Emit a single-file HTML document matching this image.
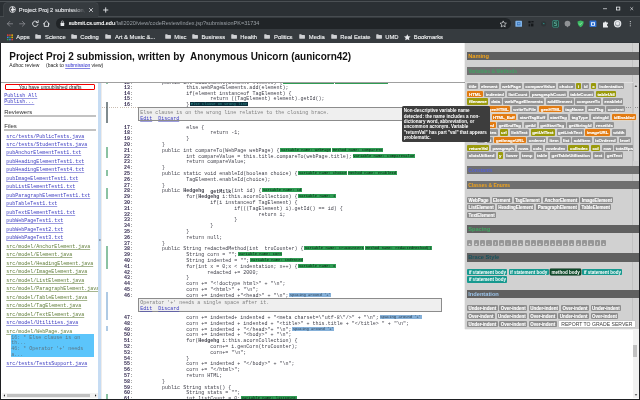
<!DOCTYPE html>
<html>
<head>
<meta charset="utf-8">
<title>Project Proj 2 submission</title>
<style>
*{box-sizing:border-box;margin:0;padding:0}
html,body{width:640px;height:400px;overflow:hidden;background:#fff}
body{position:relative;will-change:transform;font-family:"Liberation Sans",sans-serif;color:#000}
.abs{position:absolute}
/* ---------- browser chrome ---------- */
#tabstrip{left:0;top:0;width:640px;height:17px;background:#2b3034}
#tab{left:3.5px;top:3px;width:94px;height:14px;background:#363b3f;border-radius:3px 3px 0 0;box-shadow:0 0 0 0.6px #4b5054;clip-path:inset(-1px -1px 0 -1px)}
#toolbar{left:0;top:16.3px;width:640px;height:15.2px;background:#363b3f;border-top:0.6px solid #474c50}
#bmbar{left:0;top:31px;width:640px;height:12.3px;background:#363b3f}
#omni{left:56px;top:17.9px;width:454.5px;height:10.7px;border-radius:5.35px;background:#202427}
.ct{color:#e8eaed;font-size:5.6px;line-height:7px;white-space:pre}
.bm{top:33.5px;color:#f1f3f4;-webkit-text-stroke:0.12px #f1f3f4;font-size:5.85px;line-height:7px;white-space:pre}
.fold{top:34.3px;width:6.2px;height:5.1px}
/* ---------- page ---------- */
#page{left:0;top:43.3px;width:640px;height:356.7px;background:#fff;overflow:hidden}
#title{left:9.3px;top:50.9px;font-size:10px;font-weight:bold;line-height:12px;white-space:pre;color:#111}
#sub{left:9.3px;top:61.8px;font-size:5px;line-height:6px;white-space:pre;color:#222}
a{color:#2020c8;text-decoration:underline}
#hline{left:0;top:81.5px;width:465px;height:1.3px;background:#a0a0a0}
/* left */
#left{left:0;top:82.6px;width:98.2px;height:316px;overflow:hidden}
#drafts{left:5.4px;top:83.6px;width:89.4px;height:6.9px;border:0.7px solid #f20000;border-radius:1px;font-size:5px;line-height:5.6px;text-align:center;color:#222}
.mono{font-family:"Liberation Mono",monospace;font-size:5px;white-space:pre}
.lk{left:4.3px;color:#3a3ac4;text-decoration:underline;text-decoration-color:rgba(58,58,196,.5);line-height:6px}
.h3{left:4.2px;font-size:6px;line-height:8px;color:#333}
.rule{left:4.2px;width:91.8px;height:1.6px;background:#c2c2c2}
.f{left:6.2px;line-height:6px;text-decoration:underline}
.fb{color:#3a3ac0;text-decoration-color:rgba(58,58,192,.5)}
.fg{color:#5c7a34;text-decoration-color:rgba(92,122,52,.55)}
#splitter{left:98px;top:82.6px;width:3px;height:316px;background:#c6dcf3;box-shadow:0.6px 0 0 #e4e0dc}

/* code */
#code{left:101.7px;top:82.7px;width:363.3px;height:316px;overflow:hidden;background:#fff}
#code .in{position:absolute;left:0;top:-2.6px;width:500px}
.l{height:5.81px;line-height:5.81px;font-family:"Liberation Mono",monospace;font-size:5px;white-space:pre;tab-size:8;-moz-tab-size:8;color:#42424c;position:relative;letter-spacing:0.01px}
.n{display:inline-block;width:28.3px;text-align:right;font-weight:bold;color:#33294f}
.k{display:inline-block;width:8px;color:#444}
.g,.b,.d{display:inline-block;font-size:3.75px;line-height:4.1px;height:4.1px;padding:0 0.6px;margin-left:0.9px;vertical-align:-0.5px;position:relative;top:-1.5px;color:#08200f}
.g{background:#2f9c53}
.g+.g,.b+.b{margin-left:0.8px}
.b{background:#86b1d9;color:#1f3448}
.d{background:#0c2f3c;color:#2f8f8a}
.cm{margin:-1.9px 0 4.35px 36.3px;width:304px;height:14.05px;border:0.7px solid #8c8c8c;background:#efefef;font-family:"Liberation Mono",monospace;font-size:5px;line-height:5.9px;white-space:pre;color:#808080;padding:2.6px 0 0 1.2px}
.cm a{color:#3a3ac0;text-decoration-color:rgba(58,58,192,.5)}
.mk{position:absolute;left:4.3px;width:2px;opacity:.7}
.mg{background:#5aa87a}
.mb{background:#8db3d8}
.md{background:#4a5a5e}
#tip{left:401.6px;top:105.9px;width:88.2px;height:36px;border-radius:1.6px;background:#3d3d3d;color:#fff;font-weight:bold;font-size:4.55px;line-height:5.38px;white-space:pre;padding:2.4px 0 0 2.1px}

/* right panel */
#panel{left:465px;top:43.3px;width:175px;height:285.6px;box-shadow:0 0 1px rgba(0,0,0,.35);background:#d1d1d1;overflow:hidden}
.bar{left:466.9px;width:173.1px;background:#606060;font-weight:bold;white-space:pre;padding-left:1.3px}
.b1{height:8.1px;font-size:5.7px;line-height:8.3px}
.b2{height:8.1px;font-size:5px;line-height:8.2px;background:#707070}
.row{white-space:nowrap;height:6.3px;font-size:0;margin-top:-0.1px}
.t{display:inline-block;height:6.3px;line-height:6.3px;font-size:4.375px;font-weight:bold;color:#fff;-webkit-text-stroke:0.12px #fff;background:#949494;border-radius:1px;padding:1.05px 1.36px 0;margin-right:1.75px;vertical-align:top}
.o{background:#e27b12;color:#fff;padding:1.05px 1.6px 0;box-shadow:0 0 0 0.45px #f3d9b8;}
.v{background:#9a9a0c;color:#fff;padding:1.05px 1.55px 0}
.c{background:#8d8d8d;color:#fff;font-size:4.45px;margin-right:1.9px}
.te{background:#17998f;color:#fff;-webkit-text-stroke:0;font-size:4.5px;padding:1.05px 1.45px 0;margin-right:1.25px}
.dg{background:#0e4a2a;color:#fff;-webkit-text-stroke:0;box-shadow:0 0 0 0.4px #08301b;font-size:4.5px;padding:1.05px 1.45px 0;margin-right:1.25px}
#r5 .t{margin-right:2.05px}
.sp{padding:1.05px 0 0;width:5.2px;text-align:center;margin-right:1.2px;background:#979797;-webkit-text-stroke:0;color:#f4f4f4;font-size:4px}
</style>
</head>
<body>
<!-- ======= browser chrome ======= -->
<div id="tabstrip" class="abs"></div>
<div class="abs" style="left:0;top:0.7px;width:640px;height:1px;background:#4b5054"></div>
<div id="toolbar" class="abs"></div>
<div id="tab" class="abs"></div>
<div id="bmbar" class="abs"></div>
<div id="omni" class="abs"></div>
<svg class="abs" style="left:9.2px;top:6.3px;width:7px;height:7px" viewBox="0 0 14 14"><circle cx="7" cy="7" r="6.3" fill="#e8eaed"/><path d="M4.2 2.2 L6.5 3.5 L6 5.6 L3.8 6.6 L4.5 9 L6.8 9.8 L6.2 12.4 Q2 11.5 1.3 7 Q1.6 3.6 4.2 2.2Z M8.6 1.6 Q11.5 2.6 12.4 5.5 L10.4 6.6 L8.8 4.8Z M9.2 8.2 L12.2 8.6 Q11.4 11.4 8.8 12.3Z" fill="#4a4c50"/></svg>
<div class="abs ct" style="left:18.8px;top:6.5px;width:67px;font-size:5.75px;-webkit-text-stroke:0.1px #e8eaed;overflow:hidden;-webkit-mask-image:linear-gradient(90deg,#000 80%,transparent);mask-image:linear-gradient(90deg,#000 80%,transparent)">Project Proj 2 submission, written</div>
<svg class="abs" style="left:0;top:0;width:640px;height:44px" viewBox="0 0 640 44"><g stroke="#e8eaed" stroke-width="0.75" fill="none" stroke-linecap="round"><path d="M89.4 8.4 l3.2 3.2 M92.6 8.4 l-3.2 3.2"/><path d="M103.5 10 h4.4 M105.7 7.8 v4.4" stroke-width="0.9"/><path d="M603.4 8.7 h3.2" stroke-width="0.7"/><rect x="616.6" y="7.1" width="3.2" height="2.9" stroke-width="0.8"/><path d="M630.6 7.5 l2.3 2.3 M632.9 7.5 l-2.3 2.3" stroke-width="0.65"/></g><g stroke="#8b8e93" stroke-width="0.8" fill="none" stroke-linecap="round" stroke-linejoin="round"><path d="M12.6 23.8 h-5.2 M9.8 21.4 l-2.4 2.4 l2.4 2.4"/><path d="M19.6 23.8 h5.2 M22.4 21.4 l2.4 2.4 l-2.4 2.4"/></g><g stroke="#e8eaed" stroke-width="0.9" fill="none" stroke-linecap="round" stroke-linejoin="round"><path d="M37.6 22.4 A2.7 2.7 0 1 0 37.9 24.6"/><path d="M38.2 20.6 v2 h-2" stroke-width="0.8"/><path d="M43.4 23.9 L46.4 21 L49.4 23.9 M44.3 23.4 V26.4 H48.5 V23.4"/></g><rect x="60.6" y="22.8" width="3.6" height="3.2" rx="0.5" fill="#e8eaed"/><path d="M61.4 22.9 v-1 a1 1 0 0 1 2 0 v1" stroke="#e8eaed" stroke-width="0.6" fill="none"/><path d="M503.2 20.9 l0.95 2.05 2.25 0.25 -1.68 1.5 0.48 2.2 -2 -1.15 -2 1.15 0.48 -2.2 -1.68 -1.5 2.25 -0.25z" fill="none" stroke="#e8eaed" stroke-width="0.65" stroke-linejoin="round"/><rect x="515.4" y="20.8" width="6.6" height="6" rx="0.6" fill="#7fb2e8"/><rect x="517" y="22.3" width="3.4" height="3" fill="#2e6fb8"/><path d="M517.6 23.8 h2.2" stroke="#cfe4ff" stroke-width="0.7"/><g fill="#15181b"><rect x="528.4" y="21" width="2.2" height="2.2"/><rect x="531.4" y="21" width="2.2" height="1.4"/><rect x="528.6" y="24.2" width="1.6" height="2.2"/><rect x="531" y="23.6" width="2.4" height="2.8"/></g><circle cx="543.6" cy="23.8" r="2.6" fill="#2d3436"/><path d="M542.6 22.4 l2.4 1.6 -1.4 0.2z" fill="#2aa198"/><rect x="552.8" y="20.6" width="5.6" height="6.6" rx="0.5" fill="#1d3b35" stroke="#3fb79f" stroke-width="0.6"/><path d="M557 22 h-2.4 v1.7 h2 v1.8 h-2.4" fill="none" stroke="#7de0c8" stroke-width="0.6"/><path d="M567.5 20.8 a2.9 2.9 0 0 1 2.9 2.9 a2.9 2.9 0 0 1 -2.3 2.85 l-0.6 0.85 -0.6 -0.85 a2.9 2.9 0 0 1 -2.3 -2.85 a2.9 2.9 0 0 1 2.9 -2.9z" fill="#8f9295"/><path d="M580.6 20.4 l3.1 1 q0 4 -3.1 5.8 q-3.1 -1.8 -3.1 -5.8z" fill="#3cba63"/><path d="M579.2 23.6 l1 1 1.8 -2" stroke="#d9f7e2" stroke-width="0.6" fill="none"/><rect x="589.6" y="20.6" width="6.8" height="6.4" rx="0.5" fill="#2f6fd0"/><rect x="591" y="22.2" width="4" height="3.6" fill="#dbe8fb"/><rect x="592" y="23.2" width="2" height="1.8" fill="#2f6fd0"/><path d="M603 22.4 h1.5 a0.95 0.95 0 1 1 1.9 0 h1.5 v1.6 a0.95 0.95 0 1 0 0 1.9 v1.5 h-4.9z" fill="#e8eaed"/><circle cx="617.6" cy="23.8" r="3.7" fill="#e8eaed"/><circle cx="617.6" cy="23.8" r="2.6" fill="#9aa0a6"/><circle cx="617.6" cy="23.4" r="1.7" fill="#e8eaed"/><g fill="#e8eaed"><circle cx="630.3" cy="21.6" r="0.55"/><circle cx="630.3" cy="23.7" r="0.55"/><circle cx="630.3" cy="25.8" r="0.55"/></g><g><rect x="7" y="34.4" width="1.5" height="1.5" fill="#ea4335"/><rect x="9.2" y="34.4" width="1.5" height="1.5" fill="#ea4335"/><rect x="11.4" y="34.4" width="1.5" height="1.5" fill="#fbbc05"/><rect x="7" y="36.6" width="1.5" height="1.5" fill="#4285f4"/><rect x="9.2" y="36.6" width="1.5" height="1.5" fill="#34a853"/><rect x="11.4" y="36.6" width="1.5" height="1.5" fill="#fbbc05"/><rect x="7" y="38.8" width="1.5" height="1.5" fill="#34a853"/><rect x="9.2" y="38.8" width="1.5" height="1.5" fill="#4285f4"/><rect x="11.4" y="38.8" width="1.5" height="1.5" fill="#ea4335"/></g><path d="M407.3 34.2 l1 2.1 2.3 0.25 -1.72 1.55 0.5 2.25 -2.08 -1.18 -2.08 1.18 0.5 -2.25 -1.72 -1.55 2.3 -0.25z" fill="#e8eaed"/></svg>
<div class="abs ct" style="left:68.8px;top:20.4px;font-size:5.5px"><span style="color:#fff;-webkit-text-stroke:0.12px #fff">submit.cs.umd.edu</span><span style="color:#9aa0a6">/fall2020/view/codeReview/index.jsp?submissionPK=31734</span></div>
<div class="abs bm" style="left:16.3px">Apps</div>
<svg class="abs fold" style="left:35.4px" viewBox="0 0 13 10"><path d="M0.5 1.2 Q0.5 0.4 1.3 0.4 H4.6 L6 1.8 H11.7 Q12.5 1.8 12.5 2.6 V8.8 Q12.5 9.6 11.7 9.6 H1.3 Q0.5 9.6 0.5 8.8 Z" fill="#cfd1d4"/></svg>
<div class="abs bm" style="left:45px">Science</div>
<svg class="abs fold" style="left:70.9px" viewBox="0 0 13 10"><path d="M0.5 1.2 Q0.5 0.4 1.3 0.4 H4.6 L6 1.8 H11.7 Q12.5 1.8 12.5 2.6 V8.8 Q12.5 9.6 11.7 9.6 H1.3 Q0.5 9.6 0.5 8.8 Z" fill="#cfd1d4"/></svg>
<div class="abs bm" style="left:80.3px">Coding</div>
<svg class="abs fold" style="left:105.4px" viewBox="0 0 13 10"><path d="M0.5 1.2 Q0.5 0.4 1.3 0.4 H4.6 L6 1.8 H11.7 Q12.5 1.8 12.5 2.6 V8.8 Q12.5 9.6 11.7 9.6 H1.3 Q0.5 9.6 0.5 8.8 Z" fill="#cfd1d4"/></svg>
<div class="abs bm" style="left:115px">Art &amp; Music &amp;...</div>
<svg class="abs fold" style="left:164.9px" viewBox="0 0 13 10"><path d="M0.5 1.2 Q0.5 0.4 1.3 0.4 H4.6 L6 1.8 H11.7 Q12.5 1.8 12.5 2.6 V8.8 Q12.5 9.6 11.7 9.6 H1.3 Q0.5 9.6 0.5 8.8 Z" fill="#cfd1d4"/></svg>
<div class="abs bm" style="left:174.3px">Misc</div>
<svg class="abs fold" style="left:192.0px" viewBox="0 0 13 10"><path d="M0.5 1.2 Q0.5 0.4 1.3 0.4 H4.6 L6 1.8 H11.7 Q12.5 1.8 12.5 2.6 V8.8 Q12.5 9.6 11.7 9.6 H1.3 Q0.5 9.6 0.5 8.8 Z" fill="#cfd1d4"/></svg>
<div class="abs bm" style="left:201.4px">Business</div>
<svg class="abs fold" style="left:230.7px" viewBox="0 0 13 10"><path d="M0.5 1.2 Q0.5 0.4 1.3 0.4 H4.6 L6 1.8 H11.7 Q12.5 1.8 12.5 2.6 V8.8 Q12.5 9.6 11.7 9.6 H1.3 Q0.5 9.6 0.5 8.8 Z" fill="#cfd1d4"/></svg>
<div class="abs bm" style="left:240.2px">Health</div>
<svg class="abs fold" style="left:264.4px" viewBox="0 0 13 10"><path d="M0.5 1.2 Q0.5 0.4 1.3 0.4 H4.6 L6 1.8 H11.7 Q12.5 1.8 12.5 2.6 V8.8 Q12.5 9.6 11.7 9.6 H1.3 Q0.5 9.6 0.5 8.8 Z" fill="#cfd1d4"/></svg>
<div class="abs bm" style="left:274px">Politics</div>
<svg class="abs fold" style="left:299.2px" viewBox="0 0 13 10"><path d="M0.5 1.2 Q0.5 0.4 1.3 0.4 H4.6 L6 1.8 H11.7 Q12.5 1.8 12.5 2.6 V8.8 Q12.5 9.6 11.7 9.6 H1.3 Q0.5 9.6 0.5 8.8 Z" fill="#cfd1d4"/></svg>
<div class="abs bm" style="left:308.8px">Media</div>
<svg class="abs fold" style="left:330.9px" viewBox="0 0 13 10"><path d="M0.5 1.2 Q0.5 0.4 1.3 0.4 H4.6 L6 1.8 H11.7 Q12.5 1.8 12.5 2.6 V8.8 Q12.5 9.6 11.7 9.6 H1.3 Q0.5 9.6 0.5 8.8 Z" fill="#cfd1d4"/></svg>
<div class="abs bm" style="left:340.3px">Real Estate</div>
<svg class="abs fold" style="left:375.8px" viewBox="0 0 13 10"><path d="M0.5 1.2 Q0.5 0.4 1.3 0.4 H4.6 L6 1.8 H11.7 Q12.5 1.8 12.5 2.6 V8.8 Q12.5 9.6 11.7 9.6 H1.3 Q0.5 9.6 0.5 8.8 Z" fill="#cfd1d4"/></svg>
<div class="abs bm" style="left:385.2px">UMD</div>
<div class="abs bm" style="left:413.8px">Bookmarks</div>
<!-- ======= page ======= -->
<div id="page" class="abs"></div>
<div id="title" class="abs">Project Proj 2 submission, written by  Anonymous Unicorn (aunicorn42)</div>
<div id="sub" class="abs">Adhoc review<span style="display:inline-block;width:6.7px"></span>(back to <a style="text-decoration-color:rgba(32,32,200,.55)">submission</a> view)</div>
<div id="hline" class="abs"></div>
<div id="left" class="abs" style="background:#fff"></div>
<div id="drafts" class="abs">You have unpublished drafts</div>
<div class="abs mono lk" style="top:92.7px">Publish All</div>
<div class="abs mono lk" style="top:98.7px">Publish...</div>
<div class="abs h3" style="top:107.6px">Reviewers</div>
<div class="abs rule" style="top:115.4px"></div>
<div class="abs h3" style="top:121.6px">Files</div>
<div class="abs rule" style="top:129.3px"></div>
<div class="abs mono f fb" style="top:133.50px">src/tests/PublicTests.java</div>
<div class="abs mono f fb" style="top:141.98px">src/tests/StudentTests.java</div>
<div class="abs mono f fb" style="top:150.46px">pubAnchorElementTest1.txt</div>
<div class="abs mono f fb" style="top:158.94px">pubHeadingElementTest1.txt</div>
<div class="abs mono f fb" style="top:167.42px">pubHeadingElementTest4.txt</div>
<div class="abs mono f fb" style="top:175.90px">pubImageElementTest1.txt</div>
<div class="abs mono f fb" style="top:184.38px">pubListElementTest1.txt</div>
<div class="abs mono f fb" style="top:192.86px">pubParagraphElementTest1.txt</div>
<div class="abs mono f fb" style="top:201.34px">pubTableTest1.txt</div>
<div class="abs mono f fb" style="top:209.82px">pubTextElementTest1.txt</div>
<div class="abs mono f fb" style="top:218.30px">pubWebPageTest1.txt</div>
<div class="abs mono f fb" style="top:226.78px">pubWebPageTest2.txt</div>
<div class="abs mono f fb" style="top:235.26px">pubWebPageTest3.txt</div>
<div class="abs mono f fg" style="top:243.74px">src/model/AnchorElement.java</div>
<div class="abs mono f fg" style="top:252.22px">src/model/Element.java</div>
<div class="abs mono f fg" style="top:260.70px">src/model/HeadingElement.java</div>
<div class="abs mono f fg" style="top:269.18px">src/model/ImageElement.java</div>
<div class="abs mono f fg" style="top:277.66px">src/model/ListElement.java</div>
<div class="abs mono f fg" style="top:286.14px">src/model/ParagraphElement.java</div>
<div class="abs mono f fg" style="top:294.62px">src/model/TableElement.java</div>
<div class="abs mono f fg" style="top:303.10px">src/model/TagElement.java</div>
<div class="abs mono f fg" style="top:311.58px">src/model/TextElement.java</div>
<div class="abs mono f fb" style="top:320.06px">src/model/Utilities.java</div>
<div class="abs mono f fg" style="top:328.54px">src/model/WebPage.java</div>
<div class="abs mono" style="left:11.2px;top:334px;width:82.6px;height:22.6px;background:#5cc5fb;color:#5a7686;line-height:5.66px;padding:1.6px 0 0 0">16: * Else clause is on
th...
46: * Operator '+' needs
a...</div>
<div class="abs mono f fb" style="top:360.70px">src/tests/TestsSupport.java</div>
<div class="abs" style="left:2px;top:393.2px;width:96px;height:4.6px;background:#f1f1f1"></div>
<div class="abs" style="left:7.2px;top:393.8px;width:83.3px;height:3.4px;background:#c1c1c1"></div>
<svg class="abs" style="left:0;top:390px;width:100px;height:10px" viewBox="0 0 100 10"><path d="M5 4.3 v2.4 l-1.4 -1.2z M95 4.3 v2.4 l1.4 -1.2z" fill="#222"/></svg>
<div id="splitter" class="abs"></div>
<svg class="abs" style="left:98.2px;top:238px;width:3.5px;height:4px" viewBox="0 0 3.5 4"><path d="M2.3 0.9 L0.8 2 L2.3 3.1z" fill="#4a5663"/></svg>
<div id="code" class="abs"><div class="in">
<div class="l" style="top:1.1px"><span class="n">12</span><span class="k">:</span>        public int addElement(Element element) {<span class="g">Variable name: element</span><span class="g">Method name: addElement</span></div>
<div class="l"><span class="n">13</span><span class="k">:</span>                this.webPageElements.add(element);</div>
<div class="l"><span class="n">14</span><span class="k">:</span>                if(element instanceof TagElement) {</div>
<div class="l"><span class="n">15</span><span class="k">:</span>                        return ((TagElement) element).getId();</div>
<div class="l"><span class="n">16</span><span class="k">:</span>                }<span class="d">Else clause on wrong line</span></div>
<div class="cm">Else clause is on the wrong line relative to the closing brace.
<a>Edit</a>  <a>Discard</a></div>
<div class="l"><span class="n">17</span><span class="k">:</span>                else {</div>
<div class="l"><span class="n">18</span><span class="k">:</span>                        return -1;</div>
<div class="l"><span class="n">19</span><span class="k">:</span>                }</div>
<div class="l"><span class="n">20</span><span class="k">:</span>        }</div>
<div class="l"><span class="n">21</span><span class="k">:</span>        public int compareTo(WebPage webPage) {<span class="g">Variable name: webPage</span><span class="g">Method name: compareTo</span></div>
<div class="l"><span class="n">22</span><span class="k">:</span>                int compareValue = this.title.compareTo(webPage.title);<span class="g">Variable name: compareValue</span></div>
<div class="l"><span class="n">23</span><span class="k">:</span>                return compareValue;</div>
<div class="l"><span class="n">24</span><span class="k">:</span>        }</div>
<div class="l"><span class="n">25</span><span class="k">:</span>        public static void enableId(boolean choice) {<span class="g">Variable name: choice</span><span class="g">Method name: enableId</span></div>
<div class="l"><span class="n">26</span><span class="k">:</span>                TagElement.enableId(choice);</div>
<div class="l"><span class="n">27</span><span class="k">:</span>        }</div>
<div class="l"><span class="n">28</span><span class="k">:</span>        public <b>Hedgehg</b>  <b style="position:relative;top:0.5px">getMilk</b>(int id) {<span class="g">Variable name: id</span></div>
<div class="l"><span class="n">29</span><span class="k">:</span>                for(<b>Hedgehg</b> i:this.acornCollection) {<span class="g">Variable name: i</span></div>
<div class="l"><span class="n">30</span><span class="k">:</span>                        if(i instanceof TagElement) {</div>
<div class="l"><span class="n">31</span><span class="k">:</span>                                if(((TagElement) i).getId() == id) {</div>
<div class="l"><span class="n">32</span><span class="k">:</span>                                        return i;</div>
<div class="l"><span class="n">33</span><span class="k">:</span>                                }</div>
<div class="l"><span class="n">34</span><span class="k">:</span>                        }</div>
<div class="l"><span class="n">35</span><span class="k">:</span>                }</div>
<div class="l"><span class="n">36</span><span class="k">:</span>                return null;</div>
<div class="l"><span class="n">37</span><span class="k">:</span>        }</div>
<div class="l"><span class="n">38</span><span class="k">:</span>        public String redactedMethod(int  truCounter) {<span class="g">Variable name: truCounters</span><span class="g">Method name: redactedMethod()</span></div>
<div class="l"><span class="n">39</span><span class="k">:</span>                String corn = &quot;&quot;;<span class="g">Variable name: corn</span></div>
<div class="l"><span class="n">40</span><span class="k">:</span>                String indented = &quot;&quot;;<span class="g">Variable name: indented</span></div>
<div class="l"><span class="n">41</span><span class="k">:</span>                for(int x = 0;x &lt; indentation; x++) {<span class="g">Variable name: x</span></div>
<div class="l"><span class="n">42</span><span class="k">:</span>                       redacted += 2000;</div>
<div class="l"><span class="n">43</span><span class="k">:</span>                }</div>
<div class="l"><span class="n">44</span><span class="k">:</span>                corn += &quot;&lt;!doctype html&gt;&quot; + &quot;\n&quot;;</div>
<div class="l"><span class="n">45</span><span class="k">:</span>                corn += &quot;&lt;html&gt;&quot; + &quot;\n&quot;;</div>
<div class="l"><span class="n">46</span><span class="k">:</span>                corn += indented +&quot;&lt;head&gt;&quot; + &quot;\n&quot;;<span class="b">Spacing around &#x27;+&#x27;</span></div>
<div class="cm">Operator &#x27;+&#x27; needs a single space after it.
<a>Edit</a>  <a>Discard</a></div>
<div class="l"><span class="n">47</span><span class="k">:</span>                corn += indented+ indented + &quot;&lt;meta charset=\&quot;utf-8\&quot;/&gt;&quot; + &quot;\n&quot;;<span class="b">Spacing around &#x27;+&#x27;</span></div>
<div class="l"><span class="n">48</span><span class="k">:</span>                corn += indented + indented + &quot;&lt;title&gt;&quot; + this.title + &quot;&lt;/title&gt; &quot; + &quot;\n&quot;;</div>
<div class="l"><span class="n">49</span><span class="k">:</span>                corn += indented + &quot;&lt;/head&gt;&quot;+ &quot;\n&quot;;<span class="b">Spacing around &#x27;+&#x27;</span></div>
<div class="l"><span class="n">50</span><span class="k">:</span>                corn += indented + &quot;&lt;body&gt;&quot; + &quot;\n&quot;;</div>
<div class="l"><span class="n">51</span><span class="k">:</span>                for(<b>Hedgehg</b> i:this.acornCollection) {</div>
<div class="l"><span class="n">52</span><span class="k">:</span>                        corn+= i.genCorn(truCounter);</div>
<div class="l"><span class="n">53</span><span class="k">:</span>                        corn+= &quot;\n&quot;;</div>
<div class="l"><span class="n">54</span><span class="k">:</span>                }</div>
<div class="l"><span class="n">55</span><span class="k">:</span>                corn += indented + &quot;&lt;/body&gt;&quot; + &quot;\n&quot;;</div>
<div class="l"><span class="n">56</span><span class="k">:</span>                corn += &quot;&lt;/html&gt;&quot;;</div>
<div class="l"><span class="n">57</span><span class="k">:</span>                return HTML;</div>
<div class="l"><span class="n">58</span><span class="k">:</span>        }</div>
<div class="l"><span class="n">59</span><span class="k">:</span>        public String stats() {</div>
<div class="l"><span class="n">60</span><span class="k">:</span>                String stats = &quot;&quot;;</div>
<div class="l"><span class="n">61</span><span class="k">:</span>                int listCount = 0;<span class="g">Variable name: listCount</span></div>
</div>
<div class="mk mg" style="top:0;height:1.6px"></div>
<div class="abs" style="left:0;top:24.2px;width:36.6px;height:0.8px;background:repeating-linear-gradient(90deg,#c9bdb2 0 0.9px,transparent 0.9px 2.2px)"></div>
<div class="mk md" style="top:19.20px;height:21.30px"></div>
<div class="mk mg" style="top:64.60px;height:11.20px"></div>
<div class="mk mg" style="top:87.60px;height:5.70px"></div>
<div class="mk mg" style="top:105.00px;height:11.30px"></div>
<div class="mk mg" style="top:163.30px;height:23.00px"></div>
<div class="mk mb" style="top:209.30px;height:28.00px"></div>
<div class="mk mb" style="top:243.30px;height:5.50px"></div>
<div class="mk mg" style="top:311.80px;height:5.50px"></div>
</div>

<div id="panel" class="abs"></div>
<div class="abs" style="left:632px;top:43.3px;width:0.7px;height:284.9px;background:#c2c2c2"></div>
<div class="abs" style="left:632.5px;top:82.6px;width:5.9px;height:78px;background:#d6d6d6;border-left:0.5px solid #c4c4c4"></div>
<svg class="abs" style="left:632.5px;top:82.6px;width:6px;height:6px" viewBox="0 0 6 6"><path d="M1.6 3.8 h2.6 l-1.3 -1.6z" fill="#222"/></svg>
<div class="abs bar b1" style="top:51.7px;color:#f2a41c">Naming</div>
<div class="abs bar b2" style="top:67px;color:#42a163">Variables &amp; Methods</div>
<div class="abs" style="left:465px;top:81.7px;width:167.5px;height:0.9px;background:#e2e2e2"></div>
<div id="vm" class="abs" style="left:465px;top:82.6px;width:175px;height:78px">
<div class="abs row" id="r1" style="left:2.40px;top:0.45px"><span class="t ">title</span><span class="t ">element</span><span class="t ">webPage</span><span class="t ">compareValue</span><span class="t ">choice</span><span class="t v">i</span><span class="t ">id</span><span class="t v">x</span><span class="t ">indentation</span></div>
<div class="abs row" id="r2" style="left:2.40px;top:8.17px"><span class="t o">HTML</span><span class="t ">indented</span><span class="t ">listCount</span><span class="t ">paragraphCount</span><span class="t ">tableCount</span><span class="t v">tableUtil</span></div>
<div class="abs row" id="r3" style="left:2.40px;top:15.89px"><span class="t v">filename</span><span class="t ">data</span><span class="t ">webPageElements</span><span class="t ">addElement</span><span class="t ">compareTo</span><span class="t ">enableId</span></div>
<div class="abs row" id="r4" style="left:22.20px;top:23.61px"><span class="t o">genHTML</span><span class="t ">writeToFile</span><span class="t o">genHTML</span><span class="t ">tagName</span><span class="t ">endTag</span><span class="t ">content</span></div>
<div class="abs row" id="r5" style="left:26.50px;top:31.33px"><span class="t o" style="letter-spacing:-0.19px">HTML_Buff</span><span class="t ">startTagBuff</span><span class="t ">startTag</span><span class="t ">tagType</span><span class="t ">stringId</span><span class="t o">idEnabled</span></div>
<div class="abs row" id="r6" style="left:18.20px;top:39.05px"><span class="t o">html</span><span class="t ">getEndTag</span><span class="t ">getId</span><span class="t ">getStartTag</span><span class="t ">getStringId</span><span class="t ">resetIds</span></div>
<div class="abs row" id="r7" style="left:10.20px;top:46.77px"><span class="t ">attributes</span><span class="t v">url</span><span class="t ">linkText</span><span class="t v">getUrlText</span><span class="t ">getLinkText</span><span class="t o">imageURL</span><span class="t ">width</span></div>
<div class="abs row" id="r8" style="left:11.90px;top:54.49px"><span class="t ">height</span><span class="t o">getImageURL</span><span class="t ">ordered</span><span class="t ">item</span><span class="t ">list</span><span class="t ">addItem</span><span class="t ">isOrdered</span><span class="t ">level</span></div>
<div class="abs row" id="r9" style="left:2.40px;top:62.21px"><span class="t v">returnVal</span><span class="t ">paragraph</span><span class="t ">rows</span><span class="t ">cols</span><span class="t ">rowIndex</span><span class="t v">colIndex</span><span class="t v">col</span><span class="t ">row</span><span class="t " style="width:18.3px;overflow:hidden;border-radius:1px 0 0 1px;margin-right:0">totalSpaces</span></div>
<div class="abs row" id="r10" style="left:2.40px;top:69.93px"><span class="t ">slotsUtilized</span><span class="t v">y</span><span class="t ">lower</span><span class="t ">temp</span><span class="t ">table</span><span class="t ">getTableUtilization</span><span class="t ">text</span><span class="t ">getText</span></div>
</div>
<div class="abs bar b2" style="top:166.2px;color:#5360d6">Constants</div>
<div class="abs bar b2" style="top:181.1px;color:#f2a41c">Classes &amp; Enums</div>
<div class="abs row" id="c1" style="left:467.2px;top:196.60px"><span class="t c">WebPage</span><span class="t c">Element</span><span class="t c">TagElement</span><span class="t c">AnchorElement</span><span class="t c">ImageElement</span></div>
<div class="abs row" id="c2" style="left:467.2px;top:204.20px"><span class="t c">ListElement</span><span class="t c">HeadingElement</span><span class="t c">ParagraphElement</span><span class="t c">TableElement</span></div>
<div class="abs row" id="c3" style="left:467.2px;top:211.80px"><span class="t c">TextElement</span></div>
<div class="abs bar b1" style="top:225.1px;color:#3fa860">Spacing</div>
<div class="abs row" id="s1" style="left:467.2px;top:240px"><span class="t sp">+</span><span class="t sp">+</span><span class="t sp">+</span><span class="t sp">-</span><span class="t sp">/</span><span class="t sp">=</span><span class="t sp">:</span><span class="t sp">+</span><span class="t sp">+</span><span class="t sp"><</span><span class="t sp">+</span><span class="t sp">+</span><span class="t sp">+</span><span class="t sp">+</span><span class="t sp">+</span><span class="t sp">+</span><span class="t sp">+</span><span class="t sp">+</span><span class="t sp">+</span><span class="t sp">+</span><span class="t sp">/</span><span class="t sp">+</span></div>
<div class="abs bar b1" style="top:253.2px;height:8.6px;line-height:8.8px;color:#17525c">Brace Style</div>
<div class="abs row" id="b1" style="left:467.2px;top:268.8px"><span class="t te">if statement body</span><span class="t te">if statement body</span><span class="t dg">method body</span><span class="t te">if statement body</span></div>
<div class="abs row" id="b2" style="left:467.2px;top:276.4px"><span class="t te">if statement body</span></div>
<div class="abs bar b1" style="top:289.8px;color:#9cc4ea">Indentation</div>
<div class="abs row" id="i1" style="left:467.2px;top:304.90px"><span class="t c">Under-indent</span><span class="t c">Over-indent</span><span class="t c">Under-indent</span><span class="t c">Over-indent</span><span class="t c">Under-indent</span></div>
<div class="abs row" id="i2" style="left:467.2px;top:312.75px"><span class="t c">Over-indent</span><span class="t c">Under-indent</span><span class="t c">Over-indent</span><span class="t c">Under-indent</span><span class="t c">Over-indent</span></div>
<div class="abs row" id="i3" style="left:467.2px;top:320.60px"><span class="t c">Under-indent</span><span class="t c">Over-indent</span><span class="t c">Over-indent</span></div>
<div class="abs" style="left:557.8px;top:320.1px;width:78px;height:7.5px;background:#fff;border:0.5px solid #c8c8c8;border-radius:0.8px;font-size:5.1px;line-height:6.9px;text-align:center;color:#3c3c3c;white-space:pre">REPORT TO GRADE SERVER</div>
<div id="tip" class="abs">Non-descriptive variable name
detected: the name includes a non-
dictionary word, abbreviation, or
uncommon acronym. Variable
"returnVal" has part "val" that appears
problematic.</div>
<div class="abs" style="left:626.2px;top:106.9px;width:12.4px;height:0.8px;background:repeating-linear-gradient(90deg,#8f8f8f 0 0.9px,transparent 0.9px 2.2px)"></div>
<!--RIGHT3-->
<div class="abs" style="left:632.6px;top:328.9px;width:6px;height:69.6px;background:#f1f1f1"></div>
<div class="abs" style="left:633.4px;top:345px;width:4.1px;height:11.6px;background:#c1c1c1"></div>
<svg class="abs" style="left:632.6px;top:392px;width:6px;height:6px" viewBox="0 0 6 6"><path d="M1.7 2.3 h2.6 l-1.3 1.5z" fill="#333"/></svg>
<div class="abs" style="left:0;top:43.3px;width:1.2px;height:357px;background:#1e1f22"></div>
<div class="abs" style="left:638.6px;top:43.3px;width:1.4px;height:357px;background:#1e1f22"></div>
<div class="abs" style="left:0;top:398.5px;width:640px;height:1.5px;background:#1e1f22"></div>
</body>
</html>
